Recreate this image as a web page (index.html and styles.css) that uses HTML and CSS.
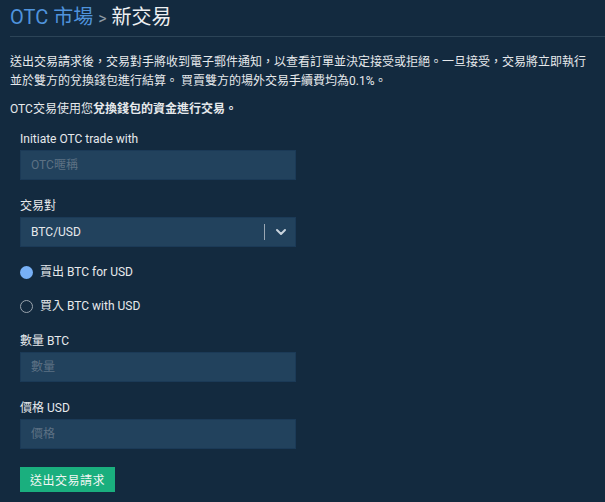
FILE: index.html
```html
<!DOCTYPE html>
<html lang="zh-Hant">
<head>
<meta charset="utf-8">
<title>OTC 市場 - 新交易</title>
<link rel="stylesheet" href="styles.css">
</head>
<body>
<div class="page">
  <h1 class="crumbs"><span class="crumb-link">OTC 市場</span><span class="crumb-sep">&gt;</span><span class="crumb-current">新交易</span></h1>
  <p class="intro">送出交易請求後，交易對手將收到電子郵件通知，以查看訂單並決定接受或拒絕。一旦接受，交易將立即執行並於雙方的兌換錢包進行結算。 買賣雙方的場外交易手續費均為0.1%。</p>
  <p class="note">OTC交易使用您<strong>兌換錢包的資金進行交易。</strong></p>

  <form class="trade-form">
    <label class="field">
      <span class="field-label">Initiate OTC trade with</span>
      <input class="text-input" type="text" placeholder="OTC暱稱">
    </label>

    <div class="field">
      <span class="field-label">交易對</span>
      <div class="select">
        <span class="select-value">BTC/USD</span>
        <span class="select-divider"></span>
        <svg class="select-arrow" width="12" height="8" viewBox="0 0 12 8"><path d="M2 2l4 4 4-4" fill="none" stroke="#c9d3dd" stroke-width="2" stroke-linecap="round" stroke-linejoin="round"/></svg>
      </div>
    </div>

    <div class="radios">
      <label class="radio"><span class="radio-dot is-checked"></span>賣出 BTC for USD</label>
      <label class="radio"><span class="radio-dot"></span>買入 BTC with USD</label>
    </div>

    <label class="field">
      <span class="field-label">數量 BTC</span>
      <input class="text-input" type="text" placeholder="數量">
    </label>

    <label class="field">
      <span class="field-label">價格 USD</span>
      <input class="text-input" type="text" placeholder="價格">
    </label>

    <button class="submit" type="button">送出交易請求</button>
  </form>
</div>
</body>
</html>
```

FILE: styles.css
```css
html, body {
  margin: 0;
  padding: 0;
  background: #132a3f;
}

body {
  font-family: Roboto, "Noto Sans CJK SC", sans-serif;
  color: #e6e9ec;
  font-size: 12px;
}

.page {
  padding: 0 0 0 10px;
}

.crumbs {
  margin: 0;
  padding: 4px 0 0;
  height: 37px;
  box-sizing: border-box;
  border-bottom: 1px solid #2c4457;
  font-size: 20px;
  font-weight: 400;
  line-height: 26px;
  display: flex;
  align-items: baseline;
}

.crumb-link {
  color: #4f93dc;
}

.crumb-sep {
  color: #8e9aa6;
  font-size: 16px;
  margin: 0 5px;
}

.crumb-current {
  color: #eef0f2;
}

.intro {
  margin: 16px 10px 0 0;
  line-height: 19px;
}

.note {
  margin: 9px 0 0;
  line-height: 19px;
}

.note strong {
  font-weight: 700;
}

.trade-form {
  padding: 12px 0 0 10px;
  width: 276px;
  display: flex;
  flex-direction: column;
}

.field {
  display: flex;
  flex-direction: column;
  margin-bottom: 18px;
}

.field-label {
  line-height: 16px;
  margin-bottom: 3px;
  color: #e6e9ec;
}

.text-input {
  box-sizing: border-box;
  height: 30px;
  padding: 0 10px;
  border: 1px solid #1b3a57;
  background: #22425d;
  color: #e6e9ec;
  font: inherit;
  outline: none;
}

.text-input::placeholder {
  color: #5d7184;
}

.select {
  box-sizing: border-box;
  height: 30px;
  border: 1px solid #1b3a57;
  background: #22425d;
  display: flex;
  align-items: center;
  padding: 0 8px 0 10px;
}

.select-value {
  flex: 1;
}

.select-divider {
  width: 1px;
  height: 16px;
  background: #9aa7b3;
  margin-right: 10px;
}

.select-arrow {
  display: block;
}

.radios {
  display: flex;
  flex-direction: column;
  gap: 20px;
  margin: 0 0 20px;
}

.radio {
  display: flex;
  align-items: center;
  line-height: 14px;
}

.radio-dot {
  box-sizing: border-box;
  width: 13px;
  height: 13px;
  border-radius: 50%;
  border: 1px solid #9aa4ae;
  margin-right: 7px;
}

.radio-dot.is-checked {
  border: none;
  background: #78b1f7;
}

.submit {
  align-self: flex-start;
  height: 25px;
  padding: 0 10px;
  border: none;
  background: #1aaf7e;
  color: #f0f6f3;
  font: inherit;
  font-size: 12px;
  letter-spacing: 0.5px;
}
```
